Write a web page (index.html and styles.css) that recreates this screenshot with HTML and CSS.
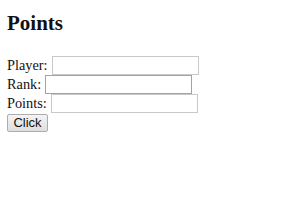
FILE: index.html
```html
<!DOCTYPE html>
<html>
<head>
<meta charset="utf-8">
<link rel="stylesheet" href="styles.css">
</head>
<body>
<div class="page">
  <h2 class="title">Points</h2>
  <form class="form">
    <div class="row"><label class="label">Player:</label><input class="field" type="text"></div>
    <div class="row"><label class="label">Rank:</label><input class="field field-dark" type="text"></div>
    <div class="row"><label class="label">Points:</label><input class="field" type="text"></div>
    <div class="row"><button class="btn" type="button">Click</button></div>
  </form>
</div>
</body>
</html>
```
FILE: styles.css
```css
html, body {
  margin: 0;
  padding: 0;
  background: #ffffff;
}
.page {
  padding: 0 7px;
  font-family: "Liberation Serif", "Times New Roman", serif;
  font-size: 14.3px;
  color: #111111;
}
.title {
  margin: 12px 0 21px;
  font-size: 21px;
  line-height: 23px;
  font-weight: bold;
}
.form {
  margin: 0;
}
.row {
  display: flex;
  align-items: center;
  gap: 4px;
  height: 19px;
}
.label {
  line-height: 16px;
  padding-bottom: 2px;
}
.field {
  box-sizing: border-box;
  width: 147px;
  height: 19px;
  margin: 0;
  padding: 0 2px;
  border: 1px solid #c9c9c9;
  background: #ffffff;
  outline: none;
}
.field-dark {
  border-color: #a3a3a3;
}
.btn {
  box-sizing: border-box;
  margin-top: 1px;
  width: 41px;
  height: 18px;
  padding: 0;
  border: 1px solid #adadad;
  border-radius: 2px;
  background: linear-gradient(#f4f4f4, #dedede);
  font-family: "Liberation Sans", Arial, sans-serif;
  font-size: 13px;
  line-height: 16px;
  color: #111111;
}
```
